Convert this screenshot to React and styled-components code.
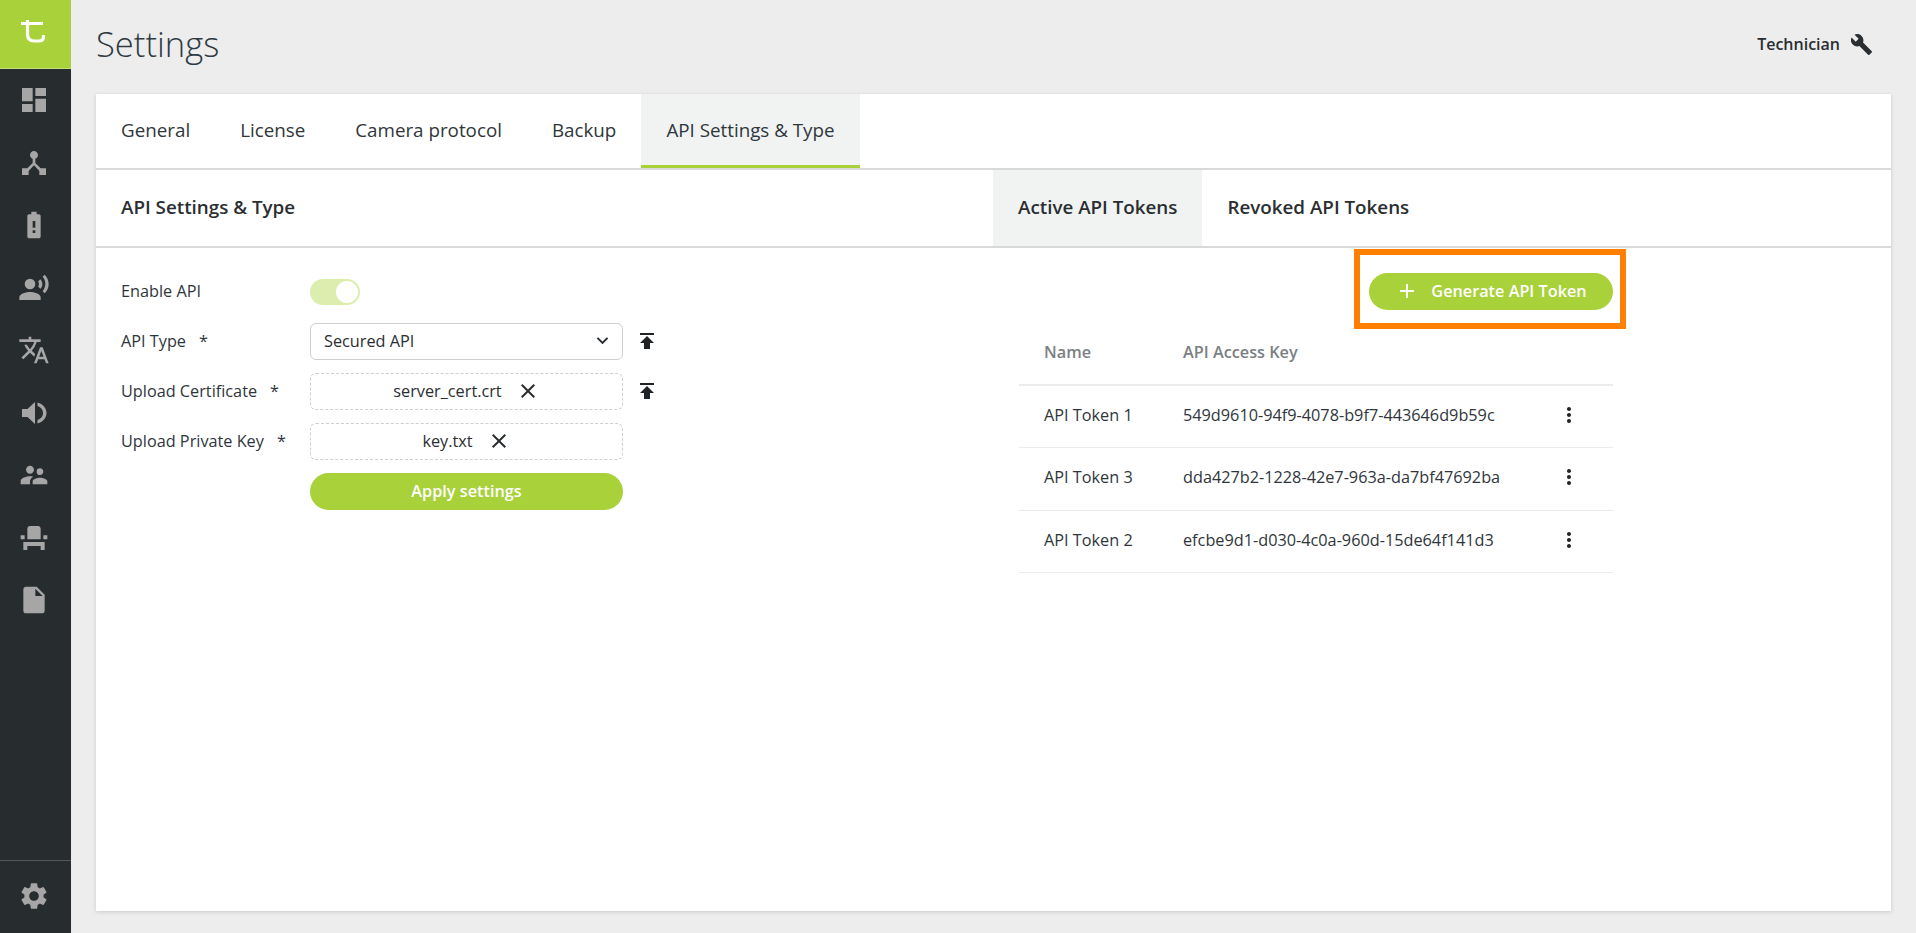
import styled, { createGlobalStyle } from "styled-components";
import {
    MdDashboard, MdDeviceHub, MdBatteryAlert, MdRecordVoiceOver, MdTranslate,
    MdSupervisorAccount, MdEventSeat, MdInsertDriveFile, MdSettings, MdBuild, MdPublish,
    MdClose, MdKeyboardArrowDown, MdMoreVert, MdAdd,
} from "react-icons/md";

const green = "#a8d13a";

function SpeakerIcon() {
    return (
        <svg width="26" height="24" viewBox="0 0 26 24" fill="currentColor">
            <path d="M1 8H6.5L14 1V23L6.5 16H1Z" />
            <path d="M16.5 1.5C22 3 25.5 7 25.5 12C25.5 17 22 21 16.5 22.5V19C19.5 18 22 15.5 22 12C22 8.5 19.5 6 16.5 5Z" />
        </svg>
    );
}

const navIcons = [MdDashboard, MdDeviceHub, MdBatteryAlert, MdRecordVoiceOver, MdTranslate, SpeakerIcon, MdSupervisorAccount, MdEventSeat, MdInsertDriveFile];
const tabs = ["General", "License", "Camera protocol", "Backup", "API Settings & Type"];
const tokens = [
    ["API Token 1", "549d9610-94f9-4078-b9f7-443646d9b59c"],
    ["API Token 3", "dda427b2-1228-42e7-963a-da7bf47692ba"],
    ["API Token 2", "efcbe9d1-d030-4c0a-960d-15de64f141d3"],
];

export default function App() {
    return (
        <Page>
            <GlobalStyle />
            <Sidebar>
                <Logo>
                    <svg width="24" height="23" viewBox="0 0 24 23" fill="none" stroke="#fff" strokeWidth="3.2">
                        <path d="M0 3.5H22M6.5 0V14C6.5 18.5 8.5 21 13 21H18C21 21 22.5 19.5 22.5 16.5V15" />
                    </svg>
                </Logo>
                <Nav>
                    {navIcons.map((Icon, i) => <NavItem key={i}><Icon size={32} /></NavItem>)}
                </Nav>
                <NavFooter><MdSettings size={32} /></NavFooter>
            </Sidebar>

            <Main>
                <Header>
                    <Title>Settings</Title>
                    <UserBox>Technician <MdBuild size={23} color="#2a2e31" /></UserBox>
                </Header>

                <Card>
                    <TabBar>
                        {tabs.map((t, i) => <Tab key={t} $active={i === 4}>{t}</Tab>)}
                    </TabBar>

                    <SectionRow>
                        <SectionTitle>API Settings &amp; Type</SectionTitle>
                        <SubTabs>
                            <SubTab $active>Active API Tokens</SubTab>
                            <SubTab>Revoked API Tokens</SubTab>
                        </SubTabs>
                    </SectionRow>

                    <Body>
                        <Form>
                            <Label>Enable API</Label>
                            <Field><Toggle><Knob /></Toggle></Field>
                            <span />

                            <Label>API Type<Star>*</Star></Label>
                            <Select>Secured API <MdKeyboardArrowDown size={23} /></Select>
                            <UploadIcon><MdPublish size={24} /></UploadIcon>

                            <Label>Upload Certificate<Star>*</Star></Label>
                            <FileBox>server_cert.crt <MdClose size={24} /></FileBox>
                            <UploadIcon><MdPublish size={24} /></UploadIcon>

                            <Label>Upload Private Key<Star>*</Star></Label>
                            <FileBox>key.txt <MdClose size={24} /></FileBox>
                            <span />

                            <span />
                            <ApplyButton>Apply settings</ApplyButton>
                        </Form>

                        <TokensPanel>
                            <GenerateRow>
                                <GenerateButton><MdAdd size={24} />Generate API Token</GenerateButton>
                                <Highlight />
                            </GenerateRow>
                            <TableHead>
                                <span>Name</span>
                                <span>API Access Key</span>
                            </TableHead>
                            {tokens.map(([name, key]) => (
                                <TableRow key={name}>
                                    <span>{name}</span>
                                    <span>{key}</span>
                                    <Kebab><MdMoreVert size={24} /></Kebab>
                                </TableRow>
                            ))}
                        </TokensPanel>
                    </Body>
                </Card>
            </Main>
        </Page>
    );
}

const GlobalStyle = createGlobalStyle`
    html, body {
        margin: 0;
        height: 100%;
        background: #ededed;
        font-family: "Open Sans", "Noto Sans", sans-serif;
        color: #2a2e31;
    }
    * {
        box-sizing: border-box;
    }
`;

const Page = styled.div`
    display: flex;
    height: 933px;
    overflow: hidden;
`;

const Sidebar = styled.aside`
    width: 71px;
    flex-shrink: 0;
    background: #272c2f;
    display: flex;
    flex-direction: column;
`;

const Logo = styled.div`
    height: 69px;
    background: ${green};
    border-bottom: 1px solid #c3de78;
    display: flex;
    align-items: center;
    justify-content: center;
    padding: 0 5px 6px 0;
`;

const Nav = styled.nav`
    flex: 1;
`;

const NavItem = styled.div`
    height: 62.5px;
    display: flex;
    align-items: center;
    justify-content: center;
    padding-right: 3px;
    color: #a6a6a6;
`;

const NavFooter = styled.div`
    height: 73px;
    border-top: 1px solid #54585b;
    display: flex;
    align-items: center;
    justify-content: center;
    padding: 0 3px 2px 0;
    color: #a6a6a6;
`;

const Main = styled.main`
    flex: 1;
    padding: 0 25px 22px;
    display: flex;
    flex-direction: column;
    min-width: 0;
`;

const Header = styled.header`
    height: 94px;
    flex-shrink: 0;
    display: flex;
    align-items: center;
    justify-content: space-between;
    padding: 0 18px 8px 0;
`;

const Title = styled.h1`
    margin: 0;
    font-size: 34.6px;
    font-weight: 300;
    color: #2f3a42;
`;

const UserBox = styled.div`
    display: flex;
    align-items: center;
    gap: 10px;
    margin-top: 2px;
    font-size: 16px;
    font-weight: 600;
`;

const Card = styled.section`
    flex: 1;
    background: #fff;
    box-shadow: 0 1px 4px rgba(0, 0, 0, 0.15);
    display: flex;
    flex-direction: column;
`;

const TabBar = styled.div`
    display: flex;
    height: 76px;
    border-bottom: 2px solid #d9d9d9;
`;

const Tab = styled.div`
    padding: 0 25px;
    display: flex;
    align-items: center;
    font-size: 18.8px;
    color: #2f363b;
    background: ${(props) => (props.$active ? "#f1f3f3" : "transparent")};
    border-bottom: 3px solid ${(props) => (props.$active ? green : "transparent")};
`;

const SectionRow = styled.div`
    display: grid;
    grid-template-columns: 897px 1fr;
    height: 78px;
    border-bottom: 2px solid #d9d9d9;
`;

const SectionTitle = styled.h2`
    margin: 0;
    padding: 0 0 2px 25px;
    display: flex;
    align-items: center;
    font-size: 18.8px;
    font-weight: 600;
`;

const SubTabs = styled.div`
    display: flex;
`;

const SubTab = styled.div`
    padding: 0 25px 2px;
    display: flex;
    align-items: center;
    font-size: 18.8px;
    font-weight: 600;
    background: ${(props) => (props.$active ? "#f1f3f3" : "transparent")};
`;

const Body = styled.div`
    flex: 1;
    display: grid;
    grid-template-columns: 897px 1fr;
    padding-top: 25px;
`;

const Form = styled.div`
    padding-left: 25px;
    display: grid;
    grid-template-columns: 189px 313px 40px;
    grid-auto-rows: 37px;
    row-gap: 13px;
    align-items: center;
    align-content: start;
    font-size: 16.25px;
`;

const Label = styled.label`
    padding-bottom: 2px;
    color: #2f363b;
`;

const Star = styled.span`
    margin-left: 13px;
`;

const Field = styled.div`
    display: flex;
    align-items: center;
`;

const Toggle = styled.div`
    width: 50px;
    height: 26px;
    border-radius: 13px;
    background: #dcedb0;
    display: flex;
    align-items: center;
    justify-content: flex-end;
    padding-right: 2px;
`;

const Knob = styled.div`
    width: 22px;
    height: 22px;
    border-radius: 50%;
    background: #fff;
`;

const Select = styled.div`
    height: 37px;
    margin-top: -1px;
    border: 1px solid #cfcfcf;
    border-radius: 6px;
    padding: 0 8px 1px 13px;
    display: flex;
    align-items: center;
    justify-content: space-between;
`;

const FileBox = styled.div`
    height: 37px;
    border: 1px dashed #cfcfcf;
    border-radius: 6px;
    display: flex;
    align-items: center;
    justify-content: center;
    gap: 14px;
    padding-bottom: 2px;
`;

const UploadIcon = styled.div`
    display: flex;
    padding: 0 0 2px 12px;
    color: #1f2326;
`;

const ApplyButton = styled.button`
    height: 37px;
    padding-bottom: 3px;
    border: none;
    border-radius: 19px;
    background: ${green};
    color: #fff;
    font-family: inherit;
    font-size: 16.25px;
    font-weight: 600;
`;

const TokensPanel = styled.div`
    width: 620px;
    padding-left: 26px;
    font-size: 16.25px;
`;

const GenerateRow = styled.div`
    position: relative;
    display: flex;
    justify-content: flex-end;
`;

const GenerateButton = styled.button`
    height: 37px;
    width: 244px;
    padding-bottom: 2px;
    border: none;
    border-radius: 19px;
    background: ${green};
    color: #fff;
    font-family: inherit;
    font-size: 16.25px;
    font-weight: 600;
    display: flex;
    align-items: center;
    justify-content: center;
    gap: 12px;
`;

const Highlight = styled.div`
    position: absolute;
    top: -24px;
    right: -13px;
    width: 272px;
    height: 80px;
    border: 6px solid #ff8000;
    pointer-events: none;
`;

const TableHead = styled.div`
    height: 76px;
    padding: 10px 0 0 25px;
    display: grid;
    grid-template-columns: 139px 1fr;
    align-items: center;
    font-weight: 600;
    color: #7b7f83;
    border-bottom: 2px solid #ebebeb;
`;

const TableRow = styled.div`
    height: 62.3px;
    padding: 0 0 3px 25px;
    display: grid;
    grid-template-columns: 139px 374px 24px;
    align-items: center;
    color: #2f363b;
    border-bottom: 1px solid #ebebeb;
`;

const Kebab = styled.div`
    display: flex;
    color: #1f2326;
`;
